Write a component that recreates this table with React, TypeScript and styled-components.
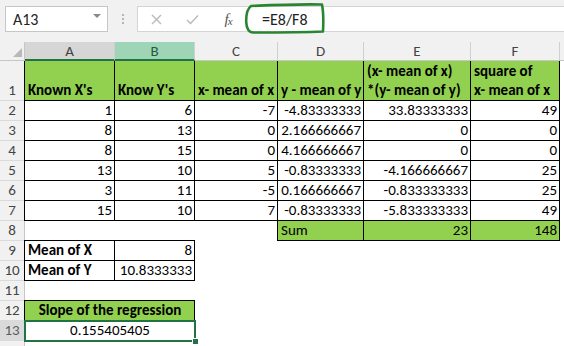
import styled, { createGlobalStyle, css } from "styled-components";

const FONT = `Carlito, Calibri, Lato, "Liberation Sans", sans-serif`;
const FILL = "#92d050";
const EXCEL = "#217346";

const GlobalStyle = createGlobalStyle`
  html, body {
    margin: 0;
    padding: 0;
    background: #fff;
  }
  body {
    font-family: ${FONT};
    overflow: hidden;
  }
`;

const Window = styled.div`
  width: 564px;
  height: 346px;
  overflow: hidden;
  background: #fff;
`;

/* ---------- formula bar ---------- */

const FormulaBar = styled.div`
  position: relative;
  height: 42px;
  box-sizing: border-box;
  padding: 6px 0 10px 5px;
  display: flex;
  background: #f1f1f1;
`;

const NameBox = styled.div`
  width: 103px;
  box-sizing: border-box;
  display: flex;
  align-items: center;
  justify-content: space-between;
  padding: 0 6px 0 7px;
  border: 1px solid #c6c6c6;
  background: #fff;
  font-size: 16px;
  color: #222;
`;

const Caret = styled.span`
  width: 0;
  height: 0;
  border-left: 4px solid transparent;
  border-right: 4px solid transparent;
  border-top: 4px solid #8a8a8a;
  margin-top: -6px;
`;

const Grip = styled.div`
  width: 29px;
  display: flex;
  flex-direction: column;
  align-items: center;
  justify-content: center;
  gap: 2px;
`;

const GripDot = styled.span`
  width: 2px;
  height: 2px;
  background: #b5b5b5;
`;

const FormulaBox = styled.div`
  flex: 1;
  display: flex;
  align-items: center;
  border: 1px solid #d4d4d4;
  border-right: none;
  background: #fff;
`;

const ToolButton = styled.div`
  width: 36px;
  height: 100%;
  display: flex;
  align-items: center;
  justify-content: center;
  color: #b9b9b9;
`;

const Fx = styled.span`
  font-family: "Liberation Serif", serif;
  font-style: italic;
  font-size: 15px;
  color: #555;
  letter-spacing: -1px;

  sub {
    font-size: 11px;
    vertical-align: -1px;
  }
`;

const FormulaText = styled.div`
  padding-left: 16px;
  font-size: 16px;
  color: #222;
`;

const Scribble = styled.svg`
  position: absolute;
  left: 243px;
  top: 2px;
  pointer-events: none;
`;

/* ---------- sheet ---------- */

const Grid = styled.div`
  display: grid;
  grid-template-columns: 25px 90px 80px 83px 86px 107px 89px 1fr;
  grid-template-rows: 19px 40px repeat(13, 20px);
  font-size: 15px;
  color: #000;
`;

const Corner = styled.div`
  position: relative;
  z-index: 2;
  box-sizing: border-box;
  background: #f1f1f1;
  border-right: 1px solid #c6c6c6;
  border-bottom: 1px solid #c6c6c6;

  &::after {
    content: "";
    position: absolute;
    right: 2px;
    bottom: 3px;
    border-left: 9px solid transparent;
    border-bottom: 9px solid #b8b8b8;
  }
`;

type Tone = "plain" | "gray" | "green";

const headBg: Record<Tone, string> = {
  plain: "#f1f1f1",
  gray: "#d6d6d6",
  green: "#9fd5b7",
};

const ColHead = styled.div<{ $tone: Tone }>`
  position: relative;
  z-index: 2;
  box-sizing: border-box;
  display: flex;
  align-items: center;
  justify-content: center;
  background: ${(p) => headBg[p.$tone]};
  border-right: 1px solid #d0d0d0;
  border-bottom: ${(p) =>
    p.$tone === "plain" ? "1px solid #c6c6c6" : `2px solid ${EXCEL}`};
  color: ${(p) => (p.$tone === "green" ? "#1f5d3c" : "#444")};
  font-size: 15px;
`;

const RowHead = styled.div<{ $active?: boolean }>`
  box-sizing: border-box;
  display: flex;
  align-items: flex-end;
  justify-content: center;
  padding-bottom: 1px;
  line-height: 18px;
  background: ${(p) => (p.$active ? "#dadada" : "#f1f1f1")};
  border-right: 1px solid #c6c6c6;
  border-bottom: 1px solid #dadada;
  color: ${(p) => (p.$active ? "#5b5b5b" : "#444")};
  font-size: 15px;
`;

type Align = "left" | "right" | "center";

const Cell = styled.div<{
  $span?: number;
  $fill?: boolean;
  $bold?: boolean;
  $align?: Align;
  $boxed?: boolean;
  $active?: boolean;
}>`
  position: relative;
  grid-column: span ${(p) => p.$span ?? 1};
  box-sizing: border-box;
  display: flex;
  flex-direction: column;
  justify-content: flex-end;
  padding: 0 3px 1px 3px;
  background: ${(p) => (p.$fill ? FILL : "#fff")};
  font-weight: ${(p) => (p.$bold ? 700 : 400)};
  text-align: ${(p) => p.$align ?? "left"};
  line-height: 19px;
  white-space: nowrap;

  ${(p) =>
    p.$boxed &&
    css`
      &::before {
        content: "";
        position: absolute;
        left: -1px;
        top: -1px;
        right: 0;
        bottom: 0;
        border: 1px solid #000;
        pointer-events: none;
        z-index: 1;
      }
    `}

  ${(p) =>
    p.$active &&
    css`
      &::after {
        content: "";
        position: absolute;
        left: -1px;
        top: -1px;
        right: -1px;
        bottom: -1px;
        border: 2px solid ${EXCEL};
        pointer-events: none;
        z-index: 3;
      }
    `}
`;

const FillHandle = styled.span`
  position: absolute;
  right: -3px;
  bottom: -3px;
  width: 5px;
  height: 5px;
  background: ${EXCEL};
  outline: 1px solid #fff;
  z-index: 4;
`;

type Spec = {
  t?: string | string[];
  span?: number;
  fill?: boolean;
  bold?: boolean;
  align?: Align;
  boxed?: boolean;
  active?: boolean;
};

const num = (t: string): Spec => ({ t, align: "right", boxed: true });
const title = (t: string | string[]): Spec => ({ t, fill: true, bold: true, boxed: true });
const blank = (n: number): Spec[] => Array.from({ length: n }, () => ({}));

const columns: { name: string; tone: Tone }[] = [
  { name: "A", tone: "gray" },
  { name: "B", tone: "green" },
  { name: "C", tone: "plain" },
  { name: "D", tone: "plain" },
  { name: "E", tone: "plain" },
  { name: "F", tone: "plain" },
  { name: "", tone: "plain" },
];

const rows: Spec[][] = [
  [
    title("Known X's"),
    title("Know Y's"),
    title("x- mean of x"),
    title("y - mean of y"),
    title(["(x- mean of x)", "*(y- mean of y)"]),
    title(["square of", "x- mean of x"]),
  ],
  ["1", "6", "-7", "-4.83333333", "33.83333333", "49"].map(num),
  ["8", "13", "0", "2.166666667", "0", "0"].map(num),
  ["8", "15", "0", "4.166666667", "0", "0"].map(num),
  ["13", "10", "5", "-0.83333333", "-4.166666667", "25"].map(num),
  ["3", "11", "-5", "0.166666667", "-0.833333333", "25"].map(num),
  ["15", "10", "7", "-0.83333333", "-5.833333333", "49"].map(num),
  [
    ...blank(3),
    { t: "Sum", fill: true, boxed: true },
    { t: "23", fill: true, boxed: true, align: "right" },
    { t: "148", fill: true, boxed: true, align: "right" },
  ],
  [{ t: "Mean of X", bold: true, boxed: true }, num("8"), ...blank(4)],
  [{ t: "Mean of Y", bold: true, boxed: true }, num("10.8333333"), ...blank(4)],
  blank(6),
  [
    { t: "Slope of the regression", span: 2, fill: true, bold: true, boxed: true, align: "center" },
    ...blank(4),
  ],
  [{ t: "0.155405405", span: 2, boxed: true, align: "center", active: true }, ...blank(4)],
];

const ACTIVE_ROW = 13;

function Scrawl() {
  return (
    <Scribble width="86" height="34" viewBox="0 0 86 34">
      <path
        d="M8 4 C30 3 60 2 79 2.5 C80.5 10 80.5 20 80 29.5 C58 30.5 30 30.5 11 30.5 C6 31 3.5 27 3.2 20 C3 13 4 7 8 4"
        fill="none"
        stroke="#2a8530"
        strokeWidth="2.6"
        strokeLinecap="round"
        strokeLinejoin="round"
      />
    </Scribble>
  );
}

export default function App() {
  return (
    <Window>
      <GlobalStyle />
      <FormulaBar>
        <NameBox>
          A13
          <Caret />
        </NameBox>
        <Grip>
          <GripDot />
          <GripDot />
          <GripDot />
        </Grip>
        <FormulaBox>
          <ToolButton>
            <svg width="11" height="11" viewBox="0 0 11 11">
              <path d="M1 1 L10 10 M10 1 L1 10" stroke="currentColor" strokeWidth="1.4" />
            </svg>
          </ToolButton>
          <ToolButton>
            <svg width="13" height="11" viewBox="0 0 13 11">
              <path d="M1 6 L4.5 9.5 L12 1.5" fill="none" stroke="currentColor" strokeWidth="1.4" />
            </svg>
          </ToolButton>
          <ToolButton>
            <Fx>
              f<sub>x</sub>
            </Fx>
          </ToolButton>
          <FormulaText>=E8/F8</FormulaText>
        </FormulaBox>
        <Scrawl />
      </FormulaBar>

      <Grid>
        <Corner />
        {columns.map((c, i) => (
          <ColHead key={i} $tone={c.tone}>
            {c.name}
          </ColHead>
        ))}

        {rows.map((cells, r) => {
          const n = r + 1;
          return [
            <RowHead key={`h${n}`} $active={n === ACTIVE_ROW}>
              {n}
            </RowHead>,
            ...cells.map((c, i) => (
              <Cell
                key={`c${n}-${i}`}
                $span={c.span}
                $fill={c.fill}
                $bold={c.bold}
                $align={c.align}
                $boxed={c.boxed}
                $active={c.active}
              >
                {(Array.isArray(c.t) ? c.t : c.t ? [c.t] : []).map((line, k) => (
                  <div key={k}>{line}</div>
                ))}
                {c.active && <FillHandle />}
              </Cell>
            )),
            <Cell key={`g${n}`} />,
          ];
        })}

        {/* next row, only its top edge shows */}
        <RowHead />
      </Grid>
    </Window>
  );
}
